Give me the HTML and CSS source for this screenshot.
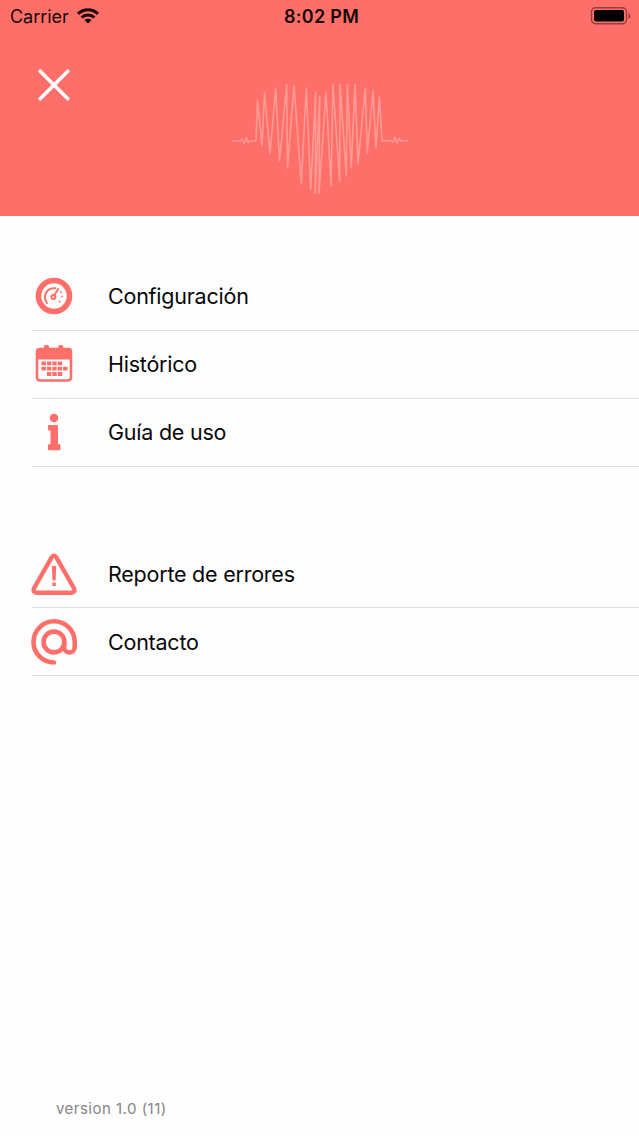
FILE: index.html
```html
<!DOCTYPE html>
<html lang="es">
<head>
<meta charset="utf-8">
<title>Menú</title>
<link rel="stylesheet" href="styles.css">
</head>
<body>
<div class="screen">
  <header class="header">
    <div class="status">
      <div class="carrier"><span class="carrier-name">Carrier</span>
        <svg class="wifi" width="22" height="16" viewBox="0 0 22 16"><g fill="none" stroke="#160706" stroke-width="3"><path d="M1 5.8C6.7.4 15.3.4 21 5.8"/><path d="M4.6 9.5c3.6-3.4 9.2-3.4 12.8 0"/></g><path d="M7.4 12.1c2-1.9 5.2-1.9 7.2 0L11 15.6z" fill="#160706"/></svg>
      </div>
      <span class="time">8:02 PM</span>
      <svg class="battery" width="41" height="20" viewBox="0 0 41 20"><rect x="1.500" y="1.700" width="35" height="16" rx="4" fill="none" stroke="#963f3a" stroke-width="1.400"/><rect x="4" y="4" width="30" height="11.400" rx="2" fill="#000"/><path d="M38.500 7c2.400 1 2.400 5 0 6z" fill="#963f3a"/></svg>
    </div>
    <div class="banner">
      <svg class="close" width="36" height="36" viewBox="0 0 36 36"><path d="M4.200 4.200l27.600 27.600M31.800 4.200L4.200 31.800" stroke="#fff" stroke-width="3.600" stroke-linecap="round"/></svg>
      <svg class="heart" width="180" height="120" viewBox="230 78 180 120"><path fill="none" stroke="#ff9a94" stroke-linejoin="round" stroke-width="1.600" d="M232 141h8l2-2 2 4.500 2.500-6 1.500 5 1.500-1.500h6.500L257.500 100 262 145.500 264.500 93 270 153.500 275.700 88 279.500 160.500 286.700 84.500 287.500 168 294 85.500 301.300 184 306.300 88 310.700 189.500 315.700 92 315.200 193.500 319.700 96 319 193.500 326 92 331 186 333 85 339.700 181.500 340 84.500 346.300 176 347.300 84.500 351.300 167.500 355 84.500 358 163.500 365.300 88 367.300 153 373 91 376 147.500 379.500 97 382 140.800h9l2 1.500 2-5 2 5.500 2.500-4.500 1.500 3 2-.5h5"/></svg>
    </div>
  </header>
  <main class="menu">
    <nav class="group group-main">
      <a class="row"><span class="icon"><svg width="46" height="46" viewBox="0 0 46 46"><circle cx="23" cy="23" r="15.500" fill="none" stroke="#ff6f69" stroke-width="5.600"/><g fill="none" stroke="#ff6f69" stroke-width="2" stroke-linecap="round"><path d="M16 30c-5-7-.4-15.500 8.400-14.800"/><path d="M22.800 23l4.400-7"/></g><circle cx="22.400" cy="24" r="3" fill="#ff6f69"/><circle cx="22.400" cy="24" r=".9" fill="#fff"/><g fill="#ff6f69"><circle cx="29.800" cy="19" r=".9"/><circle cx="31" cy="23.600" r=".9"/><circle cx="28.700" cy="28.500" r=".9"/></g></svg></span><span class="label">Configuración</span></a>
      <a class="row"><span class="icon"><svg width="46" height="46" viewBox="0 0 46 46"><rect x="6" y="8" width="34" height="31.500" rx="3" fill="none" stroke="#ff6f69" stroke-width="2.600"/><path d="M5 18.500V10q0-3 3-3h5V5.500q0-1.500 1.500-1.500h2Q18 4 18 5.500V7h9.200V5.500q0-1.500 1.500-1.500h2q1.500 0 1.500 1.500V7H38q3 0 3 3v8.500z" fill="#ff6f69"/><g stroke="#ff6f69" stroke-width="3.800" stroke-dasharray="4.400 1"><path d="M10.500 22.400h21"/><path d="M10.500 27.700h26"/><path d="M15.900 33h15.500"/></g></svg></span><span class="label">Histórico</span></a>
      <a class="row"><span class="icon"><svg width="46" height="46" viewBox="0 0 46 46"><circle cx="23" cy="9" r="4.300" fill="#ff6f69"/><path d="M17 17q0-1 1-1h8q1 0 1 1v18.200h1.500q1 0 1 1v4q0 1-1 1h-10.500q-1 0-1-1v-4q0-1 1-1h1.500V21.500H18q-1 0-1-1z" fill="#ff6f69"/></svg></span><span class="label">Guía de uso</span></a>
    </nav>
    <nav class="group">
      <a class="row"><span class="icon"><svg width="46" height="46" viewBox="0 0 46 46"><path d="M20.500 6.600q2.500-4 5 0L42.800 37q2 4.500-2.800 4.700H6Q1.200 41.500 3.200 37z" fill="none" stroke="#ff6f69" stroke-width="4.400" stroke-linejoin="round"/><path d="M20.900 15h4.300l-.6 14.500h-3.100zM21.400 31.500h3.400v3.400h-3.400z" fill="#ff6f69"/></svg></span><span class="label">Reporte de errores</span></a>
      <a class="row"><span class="icon"><svg width="46" height="46" viewBox="0 0 46 46"><g fill="none" stroke="#ff6f69" stroke-width="4.600" stroke-linecap="round"><path d="M23 43.500A20.600 20.600 0 1 1 43.700 23v5.200a5.300 5.300 0 0 1-10.600 0V23"/><circle cx="23" cy="23" r="10.400"/></g></svg></span><span class="label">Contacto</span></a>
    </nav>
  </main>
  <footer class="version">version 1.0 (11)</footer>
</div>
</body>
</html>
```
FILE: styles.css
```css
body {
  margin: 0;
  font-family: Inter, "Liberation Sans", sans-serif;
  color: #080808;
}
svg { display: block; flex: none; }
.screen {
  width: 639px;
  height: 1136px;
  display: flex;
  flex-direction: column;
  background: #fefefe;
  overflow: hidden;
}
.header {
  height: 216px;
  background: #ff6f69;
  flex: none;
}
.status {
  height: 33px;
  display: grid;
  grid-template-columns: 1fr auto 1fr;
  align-items: center;
  padding: 0 8px 0 10px;
  font-size: 18px;
  color: #160706;
}
.carrier { display: flex; align-items: center; gap: 8px; }
.carrier-name { letter-spacing: -0.05px; }
.wifi { margin-bottom: 1px; }
.time { font-weight: 600; letter-spacing: 0.3px; padding-left: 2px; }
.battery { justify-self: end; margin: 0 0 1px; }
.banner {
  display: flex;
  align-items: flex-start;
  padding: 34px 0 0 36px;
}
.heart { margin: 11px 0 0 158px; }
.menu {
  display: flex;
  flex-direction: column;
  gap: 73px;
  padding: 47px 0 0 31px;
  flex: 1;
}
.row {
  height: 68px;
  box-sizing: border-box;
  display: flex;
  align-items: center;
  gap: 31px;
  background: linear-gradient(#e0e0e1, #e0e0e1) 1px 100% / 100% 1px no-repeat;
}
.group-main .row { padding-bottom: 2px; }
.icon { width: 46px; height: 46px; flex: none; }
.label {
  font-size: 21.5px;
  line-height: 30px;
  letter-spacing: -0.23px;
  white-space: nowrap;
}
.version {
  padding: 0 0 17px 56px;
  font-size: 15px;
  line-height: 20px;
  letter-spacing: 0.48px;
  color: #858488;
}
```
